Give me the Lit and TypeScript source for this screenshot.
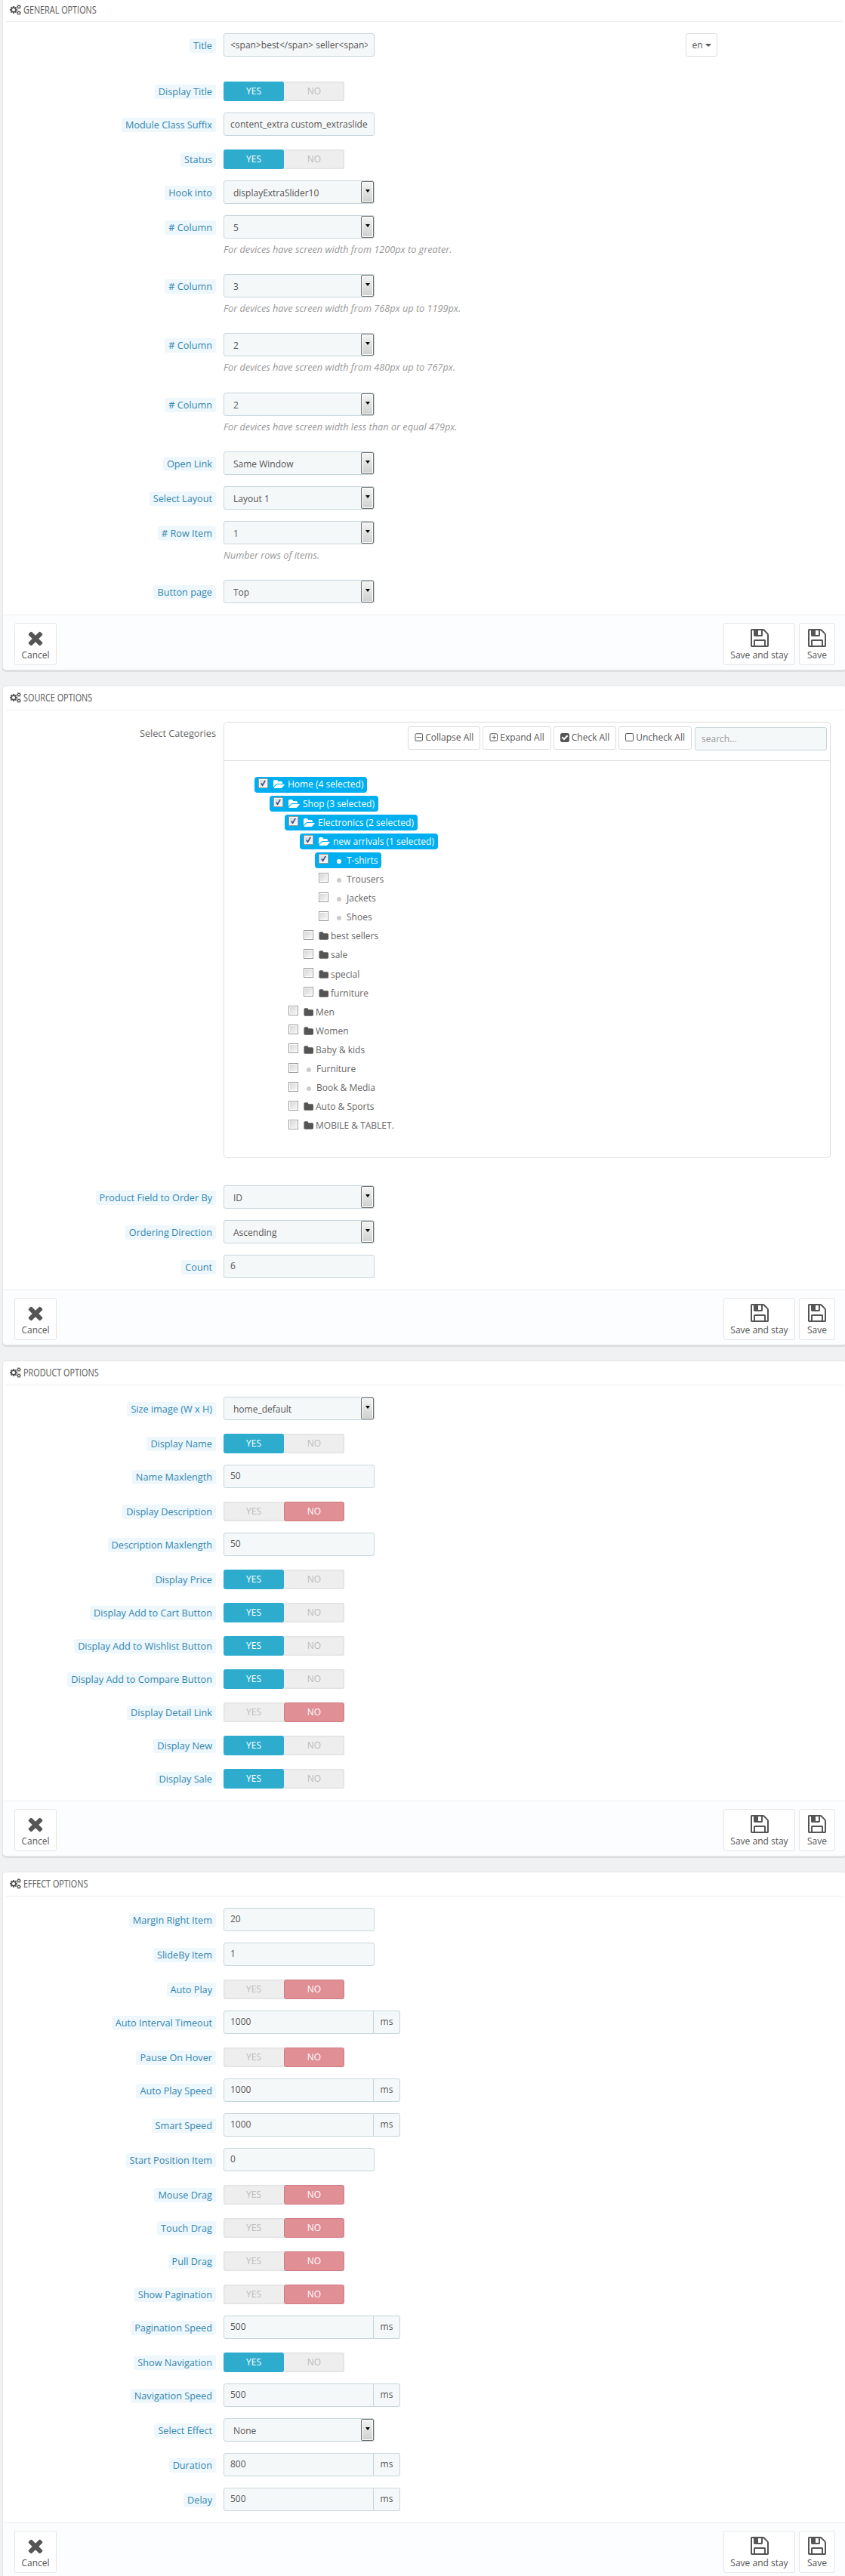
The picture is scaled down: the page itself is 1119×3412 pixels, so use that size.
import { LitElement, html, css, svg } from "lit";
import { customElement } from "lit/decorators.js";

const I = {
  cogs: "M896 896q0-106-75-181t-181-75-181 75-75 181 75 181 181 75 181-75 75-181zm768 512q0-52-38-90t-90-38-90 38-38 90q0 53 37.5 90.5t90.5 37.5 90.5-37.5 37.5-90.5zm0-1024q0-52-38-90t-90-38-90 38-38 90q0 53 37.5 90.5t90.5 37.5 90.5-37.5 37.5-90.5zm-384 421v185q0 10-7 19.5t-16 10.5l-155 24q-11 35-32 76 34 48 90 115 7 11 7 20 0 12-7 19-23 30-82.5 89.5t-78.5 59.5q-11 0-21-7l-115-90q-37 19-77 31-11 108-23 155-7 24-30 24h-186q-11 0-20-7.5t-10-17.5l-23-153q-34-10-75-31l-118 89q-7 7-20 7-11 0-21-8-144-133-144-160 0-9 7-19 10-14 41-53t47-61q-23-44-35-82l-152-24q-10-1-17-9.5t-7-19.5v-185q0-10 7-19.5t16-10.5l155-24q11-35 32-76-34-48-90-115-7-11-7-20 0-12 7-20 22-30 82-89t79-59q11 0 21 7l115 90q34-18 77-32 11-108 23-154 7-24 30-24h186q11 0 20 7.5t10 17.5l23 153q34 10 75 31l118-89q8-7 20-7 11 0 21 8 144 133 144 160 0 8-7 19-12 16-42 54t-45 60q23 48 34 82l152 23q10 2 17 10.5t7 19.5zm640 533v140q0 16-149 31-12 27-30 52 51 113 51 138 0 4-4 7-122 71-124 71-8 0-46-47t-52-68q-20 2-30 2t-30-2q-14 21-52 68t-46 47q-2 0-124-71-4-3-4-7 0-25 51-138-18-25-30-52-149-15-149-31v-140q0-16 149-31 13-29 30-52-51-113-51-138 0-4 4-7 4-2 35-20t59-34 30-16q8 0 46 46.5t52 67.5q20-2 30-2t30 2q51-71 92-112l6-2q4 0 124 70 4 3 4 7 0 25-51 138 17 23 30 52 149 15 149 31zm0-1024v140q0 16-149 31-12 27-30 52 51 113 51 138 0 4-4 7-122 71-124 71-8 0-46-47t-52-68q-20 2-30 2t-30-2q-14 21-52 68t-46 47q-2 0-124-71-4-3-4-7 0-25 51-138-18-25-30-52-149-15-149-31v-140q0-16 149-31 13-29 30-52-51-113-51-138 0-4 4-7 4-2 35-20t59-34 30-16q8 0 46 46.5t52 67.5q20-2 30-2t30 2q51-71 92-112l6-2q4 0 124 70 4 3 4 7 0 25-51 138 17 23 30 52 149 15 149 31z",
  times: "M1490 1322q0 40-28 68l-136 136q-28 28-68 28t-68-28l-294-294-294 294q-28 28-68 28t-68-28l-136-136q-28-28-28-68t28-68l294-294-294-294q-28-28-28-68t28-68l136-136q28-28 68-28t68 28l294 294 294-294q28-28 68-28t68 28l136 136q28 28 28 68t-28 68l-294 294 294 294q28 28 28 68z",
  save: "M512 1536h768v-384h-768v384zm896 0h128v-896q0-14-10-38.5t-20-34.5l-281-281q-10-10-34-20t-39-10v416q0 40-28 68t-68 28h-576q-40 0-68-28t-28-68v-416h-128v1280h128v-416q0-40 28-68t68-28h832q40 0 68 28t28 68v416zm-384-928v-320q0-13-9.5-22.5t-22.5-9.5h-192q-13 0-22.5 9.5t-9.5 22.5v320q0 13 9.5 22.5t22.5 9.5h192q13 0 22.5-9.5t9.5-22.5zm640 32v928q0 40-28 68t-68 28h-1344q-40 0-68-28t-28-68v-1344q0-40 28-68t68-28h928q40 0 88 20t76 48l280 280q28 28 48 76t20 88z",
  folder: "M1728 608v704q0 92-66 158t-158 66h-1216q-92 0-158-66t-66-158v-960q0-92 66-158t158-66h320q92 0 158 66t66 158v32h672q92 0 158 66t66 158z",
  open: "M1879 952q0 31-31 66l-336 396q-43 51-120.5 86.5t-143.5 35.5h-1088q-34 0-60.5-13t-26.5-43q0-31 31-66l336-396q43-51 120.5-86.5t143.5-35.5h1088q34 0 60.5 13t26.5 43zm-343-344v160h-832q-94 0-197 47.5t-164 119.5l-337 396-5 6q0-4-.5-12.5t-.5-12.5v-960q0-92 66-158t158-66h320q92 0 158 66t66 158v32h544q92 0 158 66t66 158z",
  minus: "M1344 800v64q0 14-9 23t-23 9h-832q-14 0-23-9t-9-23v-64q0-14 9-23t23-9h832q14 0 23 9t9 23zm128 448v-832q0-66-47-113t-113-47h-832q-66 0-113 47t-47 113v832q0 66 47 113t113 47h832q66 0 113-47t47-113zm128-832v832q0 119-84.5 203.5t-203.5 84.5h-832q-119 0-203.5-84.5t-84.5-203.5v-832q0-119 84.5-203.5t203.5-84.5h832q119 0 203.5 84.5t84.5 203.5z",
  plus: "M1344 800v64q0 14-9 23t-23 9h-288v288q0 14-9 23t-23 9h-64q-14 0-23-9t-9-23v-288h-288q-14 0-23-9t-9-23v-64q0-14 9-23t23-9h288v-288q0-14 9-23t23-9h64q14 0 23 9t9 23v288h288q14 0 23 9t9 23zm128 448v-832q0-66-47-113t-113-47h-832q-66 0-113 47t-47 113v832q0 66 47 113t113 47h832q66 0 113-47t47-113zm128-832v832q0 119-84.5 203.5t-203.5 84.5h-832q-119 0-203.5-84.5t-84.5-203.5v-832q0-119 84.5-203.5t203.5-84.5h832q119 0 203.5 84.5t84.5 203.5z",
  check: "M813 1299l614-614q19-19 19-45t-19-45l-102-102q-19-19-45-19t-45 19l-467 467-211-211q-19-19-45-19t-45 19l-102 102q-19 19-19 45t19 45l358 358q19 19 45 19t45-19zm851-883v960q0 119-84.5 203.5t-203.5 84.5h-960q-119 0-203.5-84.5t-84.5-203.5v-960q0-119 84.5-203.5t203.5-84.5h960q119 0 203.5 84.5t84.5 203.5z",
  square: "M1120 256h-832q-66 0-113 47t-47 113v832q0 66 47 113t113 47h832q66 0 113-47t47-113v-832q0-66-47-113t-113-47zm288 160v832q0 119-84.5 203.5t-203.5 84.5h-832q-119 0-203.5-84.5t-84.5-203.5v-832q0-119 84.5-203.5t203.5-84.5h832q119 0 203.5 84.5t84.5 203.5z",
};

const icon = (d: string, vb: string, w: number, h: number) =>
  html`<svg class="ico" width=${w} height=${h} viewBox=${vb} fill="currentColor">${svg`<path d=${d}></path>`}</svg>`;

type Row =
  | { k: "input"; label: string; value: string; en?: boolean; gap?: boolean }
  | { k: "addon"; label: string; value: string }
  | { k: "select"; label: string; value: string; help?: string }
  | { k: "toggle"; label: string; on: boolean; extra?: boolean };

const inp = (label: string, value: string): Row => ({ k: "input", label, value });
const ms = (label: string, value: string): Row => ({ k: "addon", label, value });
const sel = (label: string, value: string, help?: string): Row => ({ k: "select", label, value, help });
const tog = (label: string, on: boolean, extra?: boolean): Row => ({ k: "toggle", label, on, extra });

const general: Row[] = [
  { k: "input", label: "Title", value: "<span>best</span> seller<span>", en: true, gap: true },
  tog("Display Title", true),
  inp("Module Class Suffix", "content_extra custom_extraslider"),
  tog("Status", true),
  sel("Hook into", "displayExtraSlider10"),
  sel("# Column", "5", "For devices have screen width from 1200px to greater."),
  sel("# Column", "3", "For devices have screen width from 768px up to 1199px."),
  sel("# Column", "2", "For devices have screen width from 480px up to 767px."),
  sel("# Column", "2", "For devices have screen width less than or equal 479px."),
  sel("Open Link", "Same Window"),
  sel("Select Layout", "Layout 1"),
  sel("# Row Item", "1", "Number rows of items."),
  sel("Button page", "Top"),
];
const source: Row[] = [
  sel("Product Field to Order By", "ID"),
  sel("Ordering Direction", "Ascending"),
  inp("Count", "6"),
];
const product: Row[] = [
  sel("Size image (W x H)", "home_default"),
  tog("Display Name", true),
  inp("Name Maxlength", "50"),
  tog("Display Description", false),
  inp("Description Maxlength", "50"),
  tog("Display Price", true),
  tog("Display Add to Cart Button", true),
  tog("Display Add to Wishlist Button", true),
  tog("Display Add to Compare Button", true),
  tog("Display Detail Link", false),
  tog("Display New", true),
  tog("Display Sale", true, true),
];
const effect: Row[] = [
  inp("Margin Right Item", "20"),
  inp("SlideBy Item", "1"),
  tog("Auto Play", false),
  ms("Auto Interval Timeout", "1000"),
  tog("Pause On Hover", false),
  ms("Auto Play Speed", "1000"),
  ms("Smart Speed", "1000"),
  inp("Start Position Item", "0"),
  tog("Mouse Drag", false),
  tog("Touch Drag", false),
  tog("Pull Drag", false),
  tog("Show Pagination", false),
  ms("Pagination Speed", "500"),
  tog("Show Navigation", true),
  ms("Navigation Speed", "500"),
  sel("Select Effect", "None"),
  ms("Duration", "800"),
  ms("Delay", "500"),
];

type Node = { t: string; sel?: boolean; kind: "open" | "folder" | "leaf"; kids?: Node[] };
const tree: Node[] = [
  { t: "Home (4 selected)", sel: true, kind: "open", kids: [
    { t: "Shop (3 selected)", sel: true, kind: "open", kids: [
      { t: "Electronics (2 selected)", sel: true, kind: "open", kids: [
        { t: "new arrivals (1 selected)", sel: true, kind: "open", kids: [
          { t: "T-shirts", sel: true, kind: "leaf" },
          { t: "Trousers", kind: "leaf" },
          { t: "Jackets", kind: "leaf" },
          { t: "Shoes", kind: "leaf" },
        ] },
        { t: "best sellers", kind: "folder" },
        { t: "sale", kind: "folder" },
        { t: "special", kind: "folder" },
        { t: "furniture", kind: "folder" },
      ] },
      { t: "Men", kind: "folder" },
      { t: "Women", kind: "folder" },
      { t: "Baby & kids", kind: "folder" },
      { t: "Furniture", kind: "leaf" },
      { t: "Book & Media", kind: "leaf" },
      { t: "Auto & Sports", kind: "folder" },
      { t: "MOBILE & TABLET.", kind: "folder" },
    ] },
  ] },
];

@customElement("app-root")
export class AppRoot extends LitElement {
  static styles = css`
    :host { display: block; width: 1119px; height: 3412px; overflow: hidden; background: #eff1f2; font: 12px/18px "Open Sans", sans-serif; color: #555; }
    * { box-sizing: border-box; }
    .ico { display: block; flex: none; }
    .page { margin-top: -4px; }
    .panel { width: 1118px; margin: 0 0 20px 3px; background: #fff; border: 1px solid #e6e6e6; border-radius: 5px; box-shadow: 0 2px 0 rgba(0,0,0,.08); }
    .head { margin: 0 4px 15px; height: 32px; border-bottom: 1px solid #eee; display: flex; align-items: center; gap: 3px; padding: 0 0 0 5px; color: #555; }
    .head span { display: inline-block; transform: scaleX(.775); transform-origin: 0 50%; font: 14px/18px "Open Sans", sans-serif; text-transform: uppercase; white-space: nowrap; }
    .row { display: flex; margin-bottom: 15px; }
    .row.gap { margin-bottom: 30px; }
    .row.tg { padding-top: 3px; }
    .row.extra { margin-bottom: 16px; }
    .lab { width: 292px; flex: none; padding: 7px 10px 0 0; display: flex; justify-content: flex-end; align-items: flex-start; }
    .tg .lab { padding-top: 4px; }
    .pill { height: 19px; line-height: 19px; padding: 0 5px; background: #edf7fc; color: #3586ae; border-radius: 3px; white-space: nowrap; font-size: 12.7px; }
    .plain { color: #666; line-height: 19px; margin-top: -1px; font-size: 12.7px; }
    .field { display: flex; flex-direction: column; align-items: flex-start; }
    .line { display: flex; }
    .input { width: 200px; height: 31px; background: #f5f8f9; border: 1px solid #c7d6db; border-radius: 3px; padding: 0 8px; display: flex; align-items: center; }
    .input span { white-space: nowrap; overflow: hidden; width: 100%; }
    .group .input { border-radius: 3px 0 0 3px; width: 199px; }
    .add { width: 35px; height: 31px; background: #f5f8f9; border: 1px solid #c7d6db; border-left: 0; border-radius: 0 3px 3px 0; display: flex; align-items: center; justify-content: center; }
    .lang { margin-left: 412px; width: 42px; height: 31px; border: 1px solid #ddd; border-radius: 3px; background: #fff; display: flex; align-items: center; justify-content: center; gap: 3px; }
    .caret { width: 0; height: 0; border: 4px solid transparent; border-top-color: #555; border-bottom: 0; }
    .select { width: 200px; height: 31px; background: #f5f8f9; border: 1px solid #c7d6db; border-radius: 3px; display: flex; align-items: stretch; padding: 0 0 0 12px; }
    .select span { flex: 1; line-height: 31px; white-space: nowrap; overflow: hidden; }
    .arrow { width: 17px; flex: none; border: 1px solid #6e6e6e; border-radius: 2px; box-shadow: inset 0 0 0 1px #fff; background: linear-gradient(#f4f4f4, #cfcfcf); display: flex; align-items: center; justify-content: center; padding-bottom: 3px; }
    .arrow i { width: 0; height: 0; border: 3.5px solid transparent; border-top: 4px solid #000; border-bottom: 0; }
    .help { height: 32.2px; padding-top: 5px; font-style: italic; color: #999; line-height: 18px; white-space: nowrap; font-size: 12.7px; }
    .toggle { width: 160px; height: 26px; display: flex; background: #eee; border-radius: 3px; box-shadow: inset 0 0 3px rgba(0,0,0,.14); color: #bbb; }
    .toggle span { width: 80px; text-align: center; line-height: 26px; border-radius: 3px; }
    .toggle .yes { background: #2eacce; color: #fff; }
    .toggle .no { background: #e08f95; color: #fff; border: 1px solid #cf7b82; line-height: 24px; }
    .foot { height: 73px; background: #fcfdfe; border-top: 1px solid #eee; padding: 10px 14px 0 15px; display: flex; gap: 5px; border-radius: 0 0 5px 5px; }
    .btn { height: 56px; background: #fff; border: 1px solid #e6e6e6; border-radius: 3px; display: flex; flex-direction: column; align-items: center; padding: 5px 0 0; line-height: 18px; white-space: nowrap; }
    .cancel { width: 56px; margin-right: auto; }
    .stay { width: 95px; }
    .save { width: 48px; }
    .tree { width: 804px; height: 578px; border: 1px solid #ddd; border-radius: 5px; }
    .thead { height: 51px; border-bottom: 1px solid #ddd; display: flex; justify-content: flex-end; padding: 5px 4px 0 0; gap: 3px; }
    .tbtn { height: 31px; border: 1px solid #ddd; border-radius: 3px; padding: 0 8px; display: flex; align-items: center; gap: 3px; white-space: nowrap; }
    .search { width: 175px; height: 31px; margin: 1px 0 0 1px; background: #f5f8f9; border: 1px solid #c7d6db; border-radius: 3px; padding: 0 8px; line-height: 29px; color: #999; }
    ul { list-style: none; margin: 0; padding: 0 0 0 20px; }
    .root { padding: 21px 0 0 40px; }
    li .node { margin-bottom: 4.11px; }
    .node { display: table; height: 21px; border-radius: 4px; padding: 0 5px; }
    .node-in { display: flex; align-items: center; height: 21px; white-space: nowrap; color: #666; }
    .node.on { background: #00aff0; }
    .node.on .node-in { color: #fff; }
    .cb { width: 13px; height: 13px; flex: none; align-self: flex-start; margin-top: 2px; border: 1px solid #9a9a9a; box-shadow: inset 0 0 0 1px #fff; background: linear-gradient(135deg, #d4d4d4, #fafafa); display: flex; align-items: center; justify-content: center; }
    .cb svg { width: 9px; height: 9px; }
    .fo { margin: 0 3px 0 7px; color: #555; }
    .fopen { margin: 0 4px 0 7px; color: #fff; }
    .dot { width: 6px; height: 6px; border-radius: 50%; background: #ccc; margin: 2px 7px 0 11px; flex: none; }
    .on .dot { background: #fff; }
  `;

  private label(t: string) {
    return html`<div class="lab"><span class="pill">${t}</span></div>`;
  }

  private row(r: Row) {
    if (r.k === "toggle") {
      return html`<div class="row tg ${r.extra ? "extra" : ""}">${this.label(r.label)}
        <div class="toggle"><span class=${r.on ? "yes" : ""}>YES</span><span class=${r.on ? "" : "no"}>NO</span></div></div>`;
    }
    if (r.k === "select") {
      return html`<div class="row">${this.label(r.label)}
        <div class="field"><div class="select"><span>${r.value}</span><div class="arrow"><i></i></div></div>
        ${r.help ? html`<div class="help">${r.help}</div>` : ""}</div></div>`;
    }
    if (r.k === "addon") {
      return html`<div class="row group">${this.label(r.label)}<div class="line"><div class="input"><span>${r.value}</span></div><div class="add">ms</div></div></div>`;
    }
    return html`<div class="row ${r.gap ? "gap" : ""}">${this.label(r.label)}
      <div class="line"><div class="input"><span>${r.value}</span></div>
      ${r.en ? html`<div class="lang">en<i class="caret"></i></div>` : ""}</div></div>`;
  }

  private footer() {
    const saveIco = icon(I.save, "0 0 1792 1792", 28, 28);
    return html`<div class="foot">
      <div class="btn cancel">${icon(I.times, "0 0 1792 1792", 28, 28)}<span class="txt">Cancel</span></div>
      <div class="btn stay">${saveIco}<span class="txt">Save and stay</span></div>
      <div class="btn save">${saveIco}<span class="txt">Save</span></div>
    </div>`;
  }

  private node(n: Node): unknown {
    const cb = html`<span class="cb">${n.sel
      ? html`<svg viewBox="0 0 10 10"><path d="M2 5l2 3 4-7" fill="none" stroke="#3b4a8c" stroke-width="1.8"></path></svg>`
      : ""}</span>`;
    const ic = n.kind === "open"
      ? html`<span class="fopen">${icon(I.open, "0 128 1920 1536", 15, 12)}</span>`
      : n.kind === "folder"
      ? html`<span class="fo">${icon(I.folder, "0 128 1728 1536", 13, 12)}</span>`
      : html`<span class="dot"></span>`;
    return html`<li>
      <div class="node ${n.sel ? "on" : ""}"><div class="node-in">${cb}${ic}<span>${n.t}</span></div></div>
      ${n.kids ? html`<ul>${n.kids.map((k) => this.node(k))}</ul>` : ""}
    </li>`;
  }

  private panel(title: string, body: unknown) {
    return html`<section class="panel">
      <div class="head">${icon(I.cogs, "0 0 1920 1792", 15, 14)}<span>${title}</span></div>
      ${body}
      ${this.footer()}
    </section>`;
  }

  render() {
    const sq = (d: string) => icon(d, "128 128 1472 1536", 11, 12);
    const treeRow = html`<div class="row" style="margin-bottom:36px">
      <div class="lab"><span class="plain">Select Categories</span></div>
      <div class="tree">
        <div class="thead">
          <div class="tbtn">${sq(I.minus)}Collapse All</div>
          <div class="tbtn">${sq(I.plus)}Expand All</div>
          <div class="tbtn">${icon(I.check, "128 128 1536 1536", 12, 12)}Check All</div>
          <div class="tbtn">${icon(I.square, "0 128 1408 1536", 11, 12)}Uncheck All</div>
          <div class="search">search...</div>
        </div>
        <ul class="root">${tree.map((n) => this.node(n))}</ul>
      </div>
    </div>`;
    return html`<div class="page">
      ${this.panel("General Options", general.map((r) => this.row(r)))}
      ${this.panel("Source Options", [treeRow, ...source.map((r) => this.row(r))])}
      ${this.panel("Product Options", product.map((r) => this.row(r)))}
      ${this.panel("Effect Options", effect.map((r) => this.row(r)))}
    </div>`;
  }
}
